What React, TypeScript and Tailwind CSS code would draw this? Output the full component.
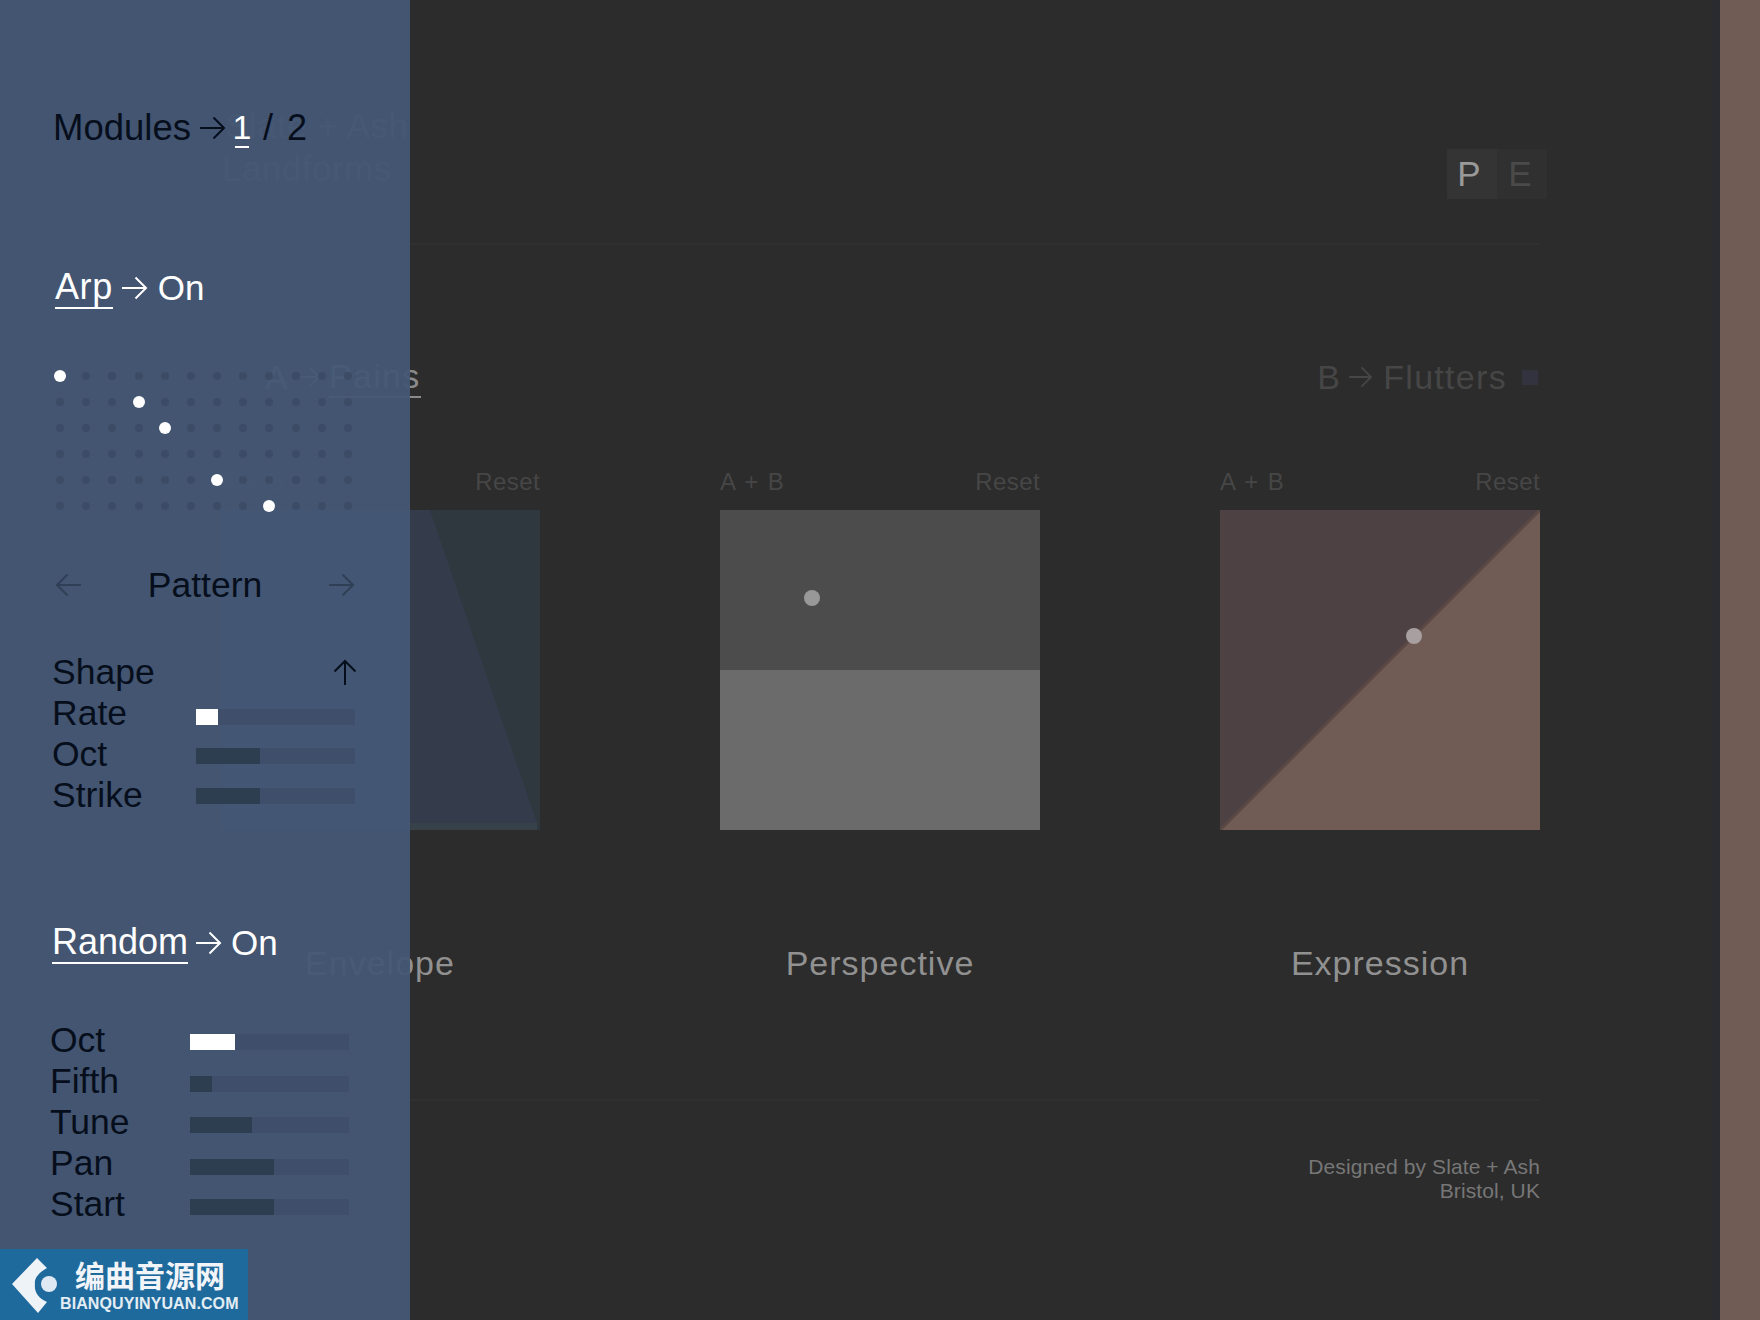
const sans = 'font-["Liberation_Sans",Arial,sans-serif]';

function ArrowRight({ className = '' }: { className?: string }) {
  return (
    <svg viewBox="0 0 26 24" fill="none" stroke="currentColor" strokeWidth="2" className={className}>
      <path d="M0 12H24M13.5 1.5L24 12L13.5 22.5" />
    </svg>
  );
}

function ArrowLeft({ className = '' }: { className?: string }) {
  return (
    <svg viewBox="0 0 26 24" fill="none" stroke="currentColor" strokeWidth="2" className={className}>
      <path d="M26 12H2M12.5 1.5L2 12L12.5 22.5" />
    </svg>
  );
}

const arpRows = [
  { label: 'Rate', fill: 14, active: true, barClass: 'mt-[8px]' },
  { label: 'Oct', fill: 40, active: false, barClass: 'mt-[5px]' },
  { label: 'Strike', fill: 40, active: false, barClass: 'mt-[3px]' },
];

const randomRows = [
  { label: 'Oct', fill: 28, active: true, barClass: 'mt-[5px]' },
  { label: 'Fifth', fill: 14, active: false, barClass: 'mt-[6px]' },
  { label: 'Tune', fill: 39, active: false, barClass: 'mt-[6px]' },
  { label: 'Pan', fill: 53, active: false, barClass: 'mt-[8px]' },
  { label: 'Start', fill: 53, active: false, barClass: 'mt-[6px]' },
];

const litDots = ['0-0', '1-3', '2-4', '4-6', '5-8'];

function Slider({ row, labelWidth, barWidth }: { row: (typeof arpRows)[number]; labelWidth: string; barWidth: string }) {
  return (
    <div className="flex h-[41px] items-center">
      <span className={labelWidth}>{row.label}</span>
      <div className={`h-[16px] bg-[#3f4f6b] ${barWidth} ${row.barClass}`}>
        <div
          className={`h-full ${row.active ? 'bg-white' : 'bg-[#2e3e51]'}`}
          style={{ width: `${row.fill}%` }}
        />
      </div>
    </div>
  );
}

function SidePanel() {
  return (
    <aside className="absolute left-0 top-0 h-[1320px] w-[410px] bg-[#455775]/95 pt-[108px] text-[36px] leading-[40px] text-[#060e1c]">
      <div className="ml-[53px] flex h-[40px] items-center">
        <span className="text-[36.5px]">Modules</span>
        <ArrowRight className="ml-[9px] h-[24px] w-[26px]" />
        <span className="ml-[9px] flex w-[14px] justify-center border-b-2 border-white text-[34px] leading-[38px] text-white">1</span>
        <span className="ml-[14px]">/</span>
        <span className="ml-[14px]">2</span>
      </div>

      <div className="ml-[55px] mt-[120px] flex h-[40px] items-center text-white">
        <span className="border-b-2 border-white leading-[40px] tracking-[0.6px]">Arp</span>
        <ArrowRight className="ml-[9px] h-[24px] w-[26px]" />
        <span className="ml-[10px] text-[35px]">On</span>
      </div>

      <div className="ml-[47px] mt-[55px] grid w-[314px] grid-cols-12">
        {Array.from({ length: 72 }, (_, i) => {
          const key = `${Math.floor(i / 12)}-${i % 12}`;
          return (
            <div key={key} className="flex h-[26px] items-center justify-center">
              {litDots.includes(key) ? (
                <span className="h-[12px] w-[12px] rounded-full bg-white" />
              ) : (
                <span className="h-[8px] w-[8px] rounded-full bg-[#3d4c66]" />
              )}
            </div>
          );
        })}
      </div>

      <div className="ml-[55px] mt-[46px] flex h-[40px] w-[300px] items-center justify-between">
        <ArrowLeft className="h-[24px] w-[26px] text-[#2f3f55]" />
        <span className="text-[35.5px]">Pattern</span>
        <ArrowRight className="h-[24px] w-[26px] text-[#2f3f55]" />
      </div>

      <div className="ml-[52px] mt-[46px] text-[35.5px]">
        <div className="flex h-[41px] w-[305px] items-center justify-between">
          <span>Shape</span>
          <svg viewBox="0 0 24 26" fill="none" stroke="currentColor" strokeWidth="2" className="h-[26px] w-[24px]">
            <path d="M12 26V2M1.5 12.5L12 2L22.5 12.5" />
          </svg>
        </div>
        {arpRows.map((row) => (
          <Slider key={row.label} row={row} labelWidth="w-[144px]" barWidth="w-[159px]" />
        ))}
      </div>

      <div className="ml-[52px] mt-[108px] flex h-[40px] items-center text-white">
        <span className="border-b-2 border-white leading-[40px]">Random</span>
        <ArrowRight className="ml-[8px] h-[24px] w-[26px]" />
        <span className="ml-[9px] text-[35px]">On</span>
      </div>

      <div className="ml-[50px] mt-[56px] text-[35.5px]">
        {randomRows.map((row) => (
          <Slider key={row.label} row={row} labelWidth="w-[140px]" barWidth="w-[159px]" />
        ))}
      </div>
    </aside>
  );
}

function Watermark() {
  return (
    <div className="absolute bottom-0 left-0 flex h-[71px] w-[248px] bg-[#1f6a9c]">
      <svg viewBox="0 0 60 71" className="h-[71px] w-[60px] flex-none">
        <path d="M12 35L37 9L47 19C38 24 34 30 35 35C34 43 38 49 47 53L38 64Z" fill="#eef3f8" />
        <circle cx="49" cy="35" r="8" fill="#dfe9f3" />
      </svg>
      <div className="flex flex-col items-start">
        <span className='ml-[15px] mt-[8px] font-["Noto_Sans_CJK_SC",sans-serif] text-[30px] font-bold leading-[34px] text-[#f1f4f8]'>
          编曲音源网
        </span>
        <span className="mt-[3px] text-[16px] font-bold leading-[20px] tracking-[0.1px] text-[#e3edf4]">
          BIANQUYINYUAN.COM
        </span>
      </div>
    </div>
  );
}

function CardHead() {
  return (
    <div className="flex h-[28px] items-center justify-between text-[24px] leading-[28px] tracking-[0.4px] text-[#464646]">
      <span className="[word-spacing:2px]">A + B</span>
      <span>Reset</span>
    </div>
  );
}

export default function App() {
  return (
    <div className={`${sans} relative flex h-[1320px] w-full overflow-hidden bg-[#2c2c2c]`}>
      <main className="flex-1 pl-[220px] pr-[165px] pt-[104px]">
        {/* Header */}
        <div className="flex h-[139px] items-start justify-between">
          <h1 className="text-[35px] font-normal leading-[43px] tracking-[0.5px] text-[#666666]">
            <span className="ml-[5px] block">Slate + Ash</span>
            <span className="ml-[2px] block">Landforms</span>
          </h1>
          <div className="mt-[45px] flex h-[50px] text-[35px] leading-[50px]">
            <span className="w-[50px] bg-[#343434] pr-[6px] text-center text-[#999999]">P</span>
            <span className="w-[50px] bg-[#303030] pr-[4px] text-center text-[#4a4a4a]">E</span>
          </div>
        </div>
        <div className="h-[2px] w-[1320px] bg-[#303030]" />

        {/* Channels */}
        <div className="mt-[112px] flex h-[40px] w-[1320px] items-center justify-between text-[34px] tracking-[1.3px]">
          <div className="ml-[45px] flex items-center text-[#8a8a8a]">
            <span>A</span>
            <ArrowRight className="ml-[8px] h-[22px] w-[24px]" />
            <span className="ml-[8px] border-b-2 border-[#8a8a8a] leading-[40px]">Pains</span>
          </div>
          <div className="mr-[2px] flex items-center text-[#464646]">
            <span>B</span>
            <ArrowRight className="ml-[8px] h-[22px] w-[24px]" />
            <span className="ml-[10px]">Flutters</span>
            <span className="ml-[15px] h-[15px] w-[16px] bg-[#33323f]" />
          </div>
        </div>

        {/* Controls */}
        <div className="mt-[71px] flex w-[1320px] gap-[180px]">
          <div className="w-[320px]">
            <CardHead />
            <svg viewBox="0 0 320 320" className="mt-[14px] block h-[320px] w-[320px]">
              <rect width="320" height="320" fill="#2f383f" />
              <polygon points="0,313 0,0 210,0 317,313" fill="#343b4b" />
              <rect y="313" width="317" height="7" fill="#36414a" />
            </svg>
            <p className="mt-[113px] text-center text-[34px] leading-[40px] tracking-[1px] text-[#919191]">Envelope</p>
          </div>

          <div className="w-[320px]">
            <CardHead />
            <div className="relative mt-[14px] h-[320px]">
              <div className="h-[160px] bg-[#4c4c4c]" />
              <div className="h-[160px] bg-[#6b6b6b]" />
              <span className="absolute left-[84px] top-[80px] h-[16px] w-[16px] rounded-full bg-[#989898]" />
            </div>
            <p className="mt-[113px] text-center text-[34px] leading-[40px] tracking-[1px] text-[#919191]">Perspective</p>
          </div>

          <div className="w-[320px]">
            <CardHead />
            <div className="relative mt-[14px] h-[320px]">
              <svg viewBox="0 0 320 320" className="block h-[320px] w-[320px]">
                <rect width="320" height="320" fill="#4e4144" />
                <polygon points="320,0 320,320 0,320" fill="#705c55" />
                <path d="M320 0L0 320" stroke="#5a4845" strokeWidth="3" />
              </svg>
              <span className="absolute left-[186px] top-[118px] h-[16px] w-[16px] rounded-full bg-[#a89fa0]" />
            </div>
            <p className="mt-[113px] text-center text-[34px] leading-[40px] tracking-[1px] text-[#919191]">Expression</p>
          </div>
        </div>

        {/* Footer */}
        <div className="mt-[116px] h-[2px] w-[1320px] bg-[#303030]" />
        <div className="mt-[54px] w-[1320px] text-right text-[21px] leading-[24px] tracking-[0.1px] text-[#777777]">
          <p>Designed by Slate + Ash</p>
          <p>Bristol, UK</p>
        </div>
      </main>

      <div className="w-[8px] flex-none bg-[#2a2a31]" />
      <div className="w-[40px] flex-none bg-[#705b55]" />

      <SidePanel />
      <Watermark />
    </div>
  );
}
